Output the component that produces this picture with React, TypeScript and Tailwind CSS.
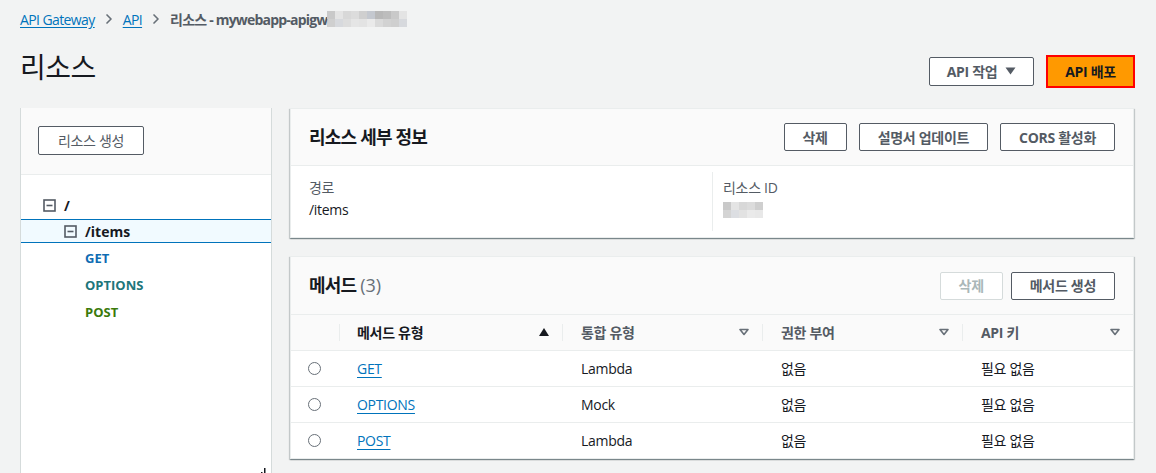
import { ChevronRight } from "lucide-react";

const font = { fontFamily: '"Open Sans", "Noto Sans CJK KR", sans-serif' };

const Btn = ({ children, disabled }: { children: React.ReactNode; disabled?: boolean }) => (
  <button
    className={
      disabled
        ? "h-[28px] px-[18px] rounded-[2px] border border-[#d5dbdb] bg-white text-[14px] font-bold text-[#aab7b8] tracking-[-0.3px]"
        : "h-[28px] px-[18px] rounded-[2px] border border-[#545b64] bg-white text-[14px] font-bold text-[#545b64] tracking-[-0.3px]"
    }
  >
    {children}
  </button>
);

const MinusBox = () => (
  <svg width="13" height="13" viewBox="0 0 13 13" className="shrink-0">
    <rect x="1" y="1" width="11" height="11" fill="none" stroke="#545b64" strokeWidth="1.6" />
    <line x1="3.5" y1="6.5" x2="9.5" y2="6.5" stroke="#545b64" strokeWidth="1.6" />
  </svg>
);

const SortDown = () => (
  <svg width="10" height="8" viewBox="0 0 10 8">
    <path d="M1 1.5h8L5 6.5z" fill="none" stroke="#687078" strokeWidth="1.6" strokeLinejoin="round" />
  </svg>
);

const Blur = ({ w }: { w: number }) => {
  const shades = ["#c9c9c9", "#dcdcdc", "#b8b8b8", "#e4e4e4", "#cfcfcf", "#bdbdbd", "#d8d8d8", "#c4c8cf"];
  const n = Math.floor(w / 8);
  return (
    <span className="inline-flex flex-col align-middle">
      <span className="flex">
        {Array.from({ length: n }).map((_, i) => (
          <span key={i} className="w-[8px] h-[8px]" style={{ background: shades[(i * 3) % shades.length] }} />
        ))}
      </span>
      <span className="flex">
        {Array.from({ length: n }).map((_, i) => (
          <span key={i} className="w-[8px] h-[8px]" style={{ background: shades[(i * 5 + 2) % shades.length], opacity: 0.6 }} />
        ))}
      </span>
    </span>
  );
};

const rows = [
  { m: "GET", t: "Lambda" },
  { m: "OPTIONS", t: "Mock" },
  { m: "POST", t: "Lambda" },
];

export default function App() {
  return (
    <div style={font} className="w-[1156px] h-[473px] overflow-hidden bg-[#f2f3f3] text-[#16191f]">
      {/* breadcrumb */}
      <div className="flex items-center h-[20px] mt-[9px] px-5 text-[14px] tracking-[-0.6px]">
        <a className="text-[#0073bb] underline underline-offset-2">API Gateway</a>
        <ChevronRight className="w-[16px] h-[16px] mx-[6px] text-[#687078]" strokeWidth={2.5} />
        <a className="text-[#0073bb] underline underline-offset-2">API</a>
        <ChevronRight className="w-[16px] h-[16px] mx-[6px] text-[#687078]" strokeWidth={2.5} />
        <span className="text-[#545b64] font-bold tracking-[-0.8px]">리소스 - mywebapp-apigw</span>
        <Blur w={82} />
      </div>

      {/* header */}
      <div className="flex items-center justify-between h-[60px] mt-[12px] pl-5 pr-[21px]">
        <h1 className="text-[28px] font-normal leading-[34px] mb-[8px] tracking-[-0.5px]">리소스</h1>
        <div className="flex items-center gap-[12px]">
          <button className="h-[29px] w-[105px] rounded-[2px] border border-[#545b64] bg-white text-[14px] font-bold text-[#545b64] flex items-center justify-center gap-[8px] tracking-[-0.3px]">
            API 작업
            <svg width="11" height="8" viewBox="0 0 11 8">
              <path d="M0.5 0.5h10L5.5 7.5z" fill="#545b64" />
            </svg>
          </button>
          <div className="border-2 border-[#ff0000] p-0">
            <button className="h-[29px] w-[85px] bg-[#ff9900] text-[14px] font-bold text-[#16191f] tracking-[-0.3px]">
              API 배포
            </button>
          </div>
        </div>
      </div>

      {/* main */}
      <div className="flex gap-[18px] mt-[7px] pl-5 pr-[22px]">
        {/* left panel */}
        <div className="relative w-[252px] h-[380px] shrink-0 bg-white border-x border-[#d5dbdb]">
          <div className="h-[67px] bg-[#fafafa] border-b border-[#eaeded] pl-[17px] pt-[18px]">
            <button className="h-[29px] w-[106px] rounded-[2px] border border-[#545b64] bg-white text-[14px] text-[#545b64] tracking-[-0.3px]">
              리소스 생성
            </button>
          </div>
          <div className="pt-[17px]">
            <div className="h-[26px] flex items-center gap-[8px] pl-[22px]">
              <MinusBox />
              <span className="text-[14px] font-bold">/</span>
            </div>
            <div className="h-[24px] mt-[1px] flex items-center gap-[8px] pl-[43px] bg-[#f1faff] border-y border-[#0073bb]">
              <MinusBox />
              <span className="text-[14px] font-bold">/items</span>
            </div>
            <div className="mt-[2px] h-[27px] flex items-center pl-[64px] text-[13px] font-bold text-[#0f6cb3]">GET</div>
            <div className="h-[27px] flex items-center pl-[64px] text-[13px] font-bold text-[#20757a]">OPTIONS</div>
            <div className="h-[27px] flex items-center pl-[64px] text-[13px] font-bold text-[#3b7a0b]">POST</div>
          </div>
          <svg className="absolute right-[4px] bottom-[12px]" width="6" height="8" viewBox="0 0 6 8">
            <rect x="0" y="4" width="1.5" height="4" fill="#16191f" />
            <rect x="3" y="0" width="1.5" height="8" fill="#16191f" />
          </svg>
        </div>

        {/* right column */}
        <div className="flex-1 flex flex-col gap-[18px]">
          {/* details card */}
          <div className="bg-white border border-[#eaeded] shadow-[0_1px_1px_0_rgba(0,28,36,0.3),1px_1px_1px_0_rgba(0,28,36,0.15),-1px_1px_1px_0_rgba(0,28,36,0.15)]">
            <div className="h-[57px] bg-[#fafafa] border-b border-[#eaeded] flex items-center justify-between pl-[18px] pr-[18px]">
              <h2 className="text-[18px] font-bold tracking-[-0.8px]">리소스 세부 정보</h2>
              <div className="flex gap-[12px]">
                <Btn>삭제</Btn>
                <Btn>설명서 업데이트</Btn>
                <Btn>CORS 활성화</Btn>
              </div>
            </div>
            <div className="grid grid-cols-2 py-[6px]">
              <div className="pl-[18px] pt-[5px] pb-[10px] text-[14px] tracking-[-0.3px]">
                <div className="text-[#545b64] leading-[22px]">경로</div>
                <div className="leading-[22px]">/items</div>
              </div>
              <div className="border-l border-[#eaeded] pl-[10px] pt-[5px] pb-[10px] text-[14px] tracking-[-0.3px]">
                <div className="text-[#545b64] leading-[22px]">리소스 ID</div>
                <div className="leading-[22px] flex items-center h-[22px]">
                  <Blur w={40} />
                </div>
              </div>
            </div>
          </div>

          {/* methods card */}
          <div className="bg-white border border-[#eaeded] shadow-[0_1px_1px_0_rgba(0,28,36,0.3),1px_1px_1px_0_rgba(0,28,36,0.15),-1px_1px_1px_0_rgba(0,28,36,0.15)]">
            <div className="h-[58px] bg-[#fafafa] border-b border-[#eaeded] flex items-center justify-between pl-[18px] pr-[18px]">
              <h2 className="text-[18px] font-bold tracking-[-0.8px]">
                메서드 <span className="font-normal text-[#687078] tracking-normal">(3)</span>
              </h2>
              <div className="flex gap-[8px]">
                <Btn disabled>삭제</Btn>
                <Btn>메서드 생성</Btn>
              </div>
            </div>
            <table className="w-full border-collapse text-[14px] tracking-[-0.3px]">
              <thead>
                <tr className="h-[35px] bg-[#fafafa] border-b border-[#eaeded]">
                  <th className="w-[49px] p-0">
                    <div className="h-[17px] border-r border-[#eaeded] ml-auto w-0" />
                  </th>
                  <th className="w-[223px] p-0 text-left">
                    <div className="flex items-center justify-between pl-[17px] pr-[13px] border-r border-[#eaeded] h-[17px] font-bold">
                      <span>메서드 유형</span>
                      <svg width="10" height="8" viewBox="0 0 10 8">
                        <path d="M0 8L5 0l5 8z" fill="#16191f" />
                      </svg>
                    </div>
                  </th>
                  <th className="w-[200px] p-0 text-left">
                    <div className="flex items-center justify-between pl-[18px] pr-[13px] border-r border-[#eaeded] h-[17px] font-bold text-[#545b64]">
                      <span>통합 유형</span>
                      <SortDown />
                    </div>
                  </th>
                  <th className="w-[200px] p-0 text-left">
                    <div className="flex items-center justify-between pl-[18px] pr-[13px] border-r border-[#eaeded] h-[17px] font-bold text-[#545b64]">
                      <span>권한 부여</span>
                      <SortDown />
                    </div>
                  </th>
                  <th className="p-0 text-left">
                    <div className="flex items-center justify-between pl-[18px] pr-[13px] h-[17px] font-bold text-[#545b64]">
                      <span>API 키</span>
                      <SortDown />
                    </div>
                  </th>
                </tr>
              </thead>
              <tbody>
                {rows.map((r, i) => (
                  <tr key={r.m} className={i < rows.length - 1 ? "h-[36px] border-b border-[#eaeded]" : "h-[36px]"}>
                    <td className="pl-[17px]">
                      <span className="block w-[13px] h-[13px] rounded-full border border-[#687078]" />
                    </td>
                    <td className="pl-[17px]">
                      <a className="text-[#0073bb] underline underline-offset-[3px]">{r.m}</a>
                    </td>
                    <td className="pl-[18px]">{r.t}</td>
                    <td className="pl-[18px]">없음</td>
                    <td className="pl-[18px]">필요 없음</td>
                  </tr>
                ))}
              </tbody>
            </table>
          </div>
        </div>
      </div>
    </div>
  );
}
